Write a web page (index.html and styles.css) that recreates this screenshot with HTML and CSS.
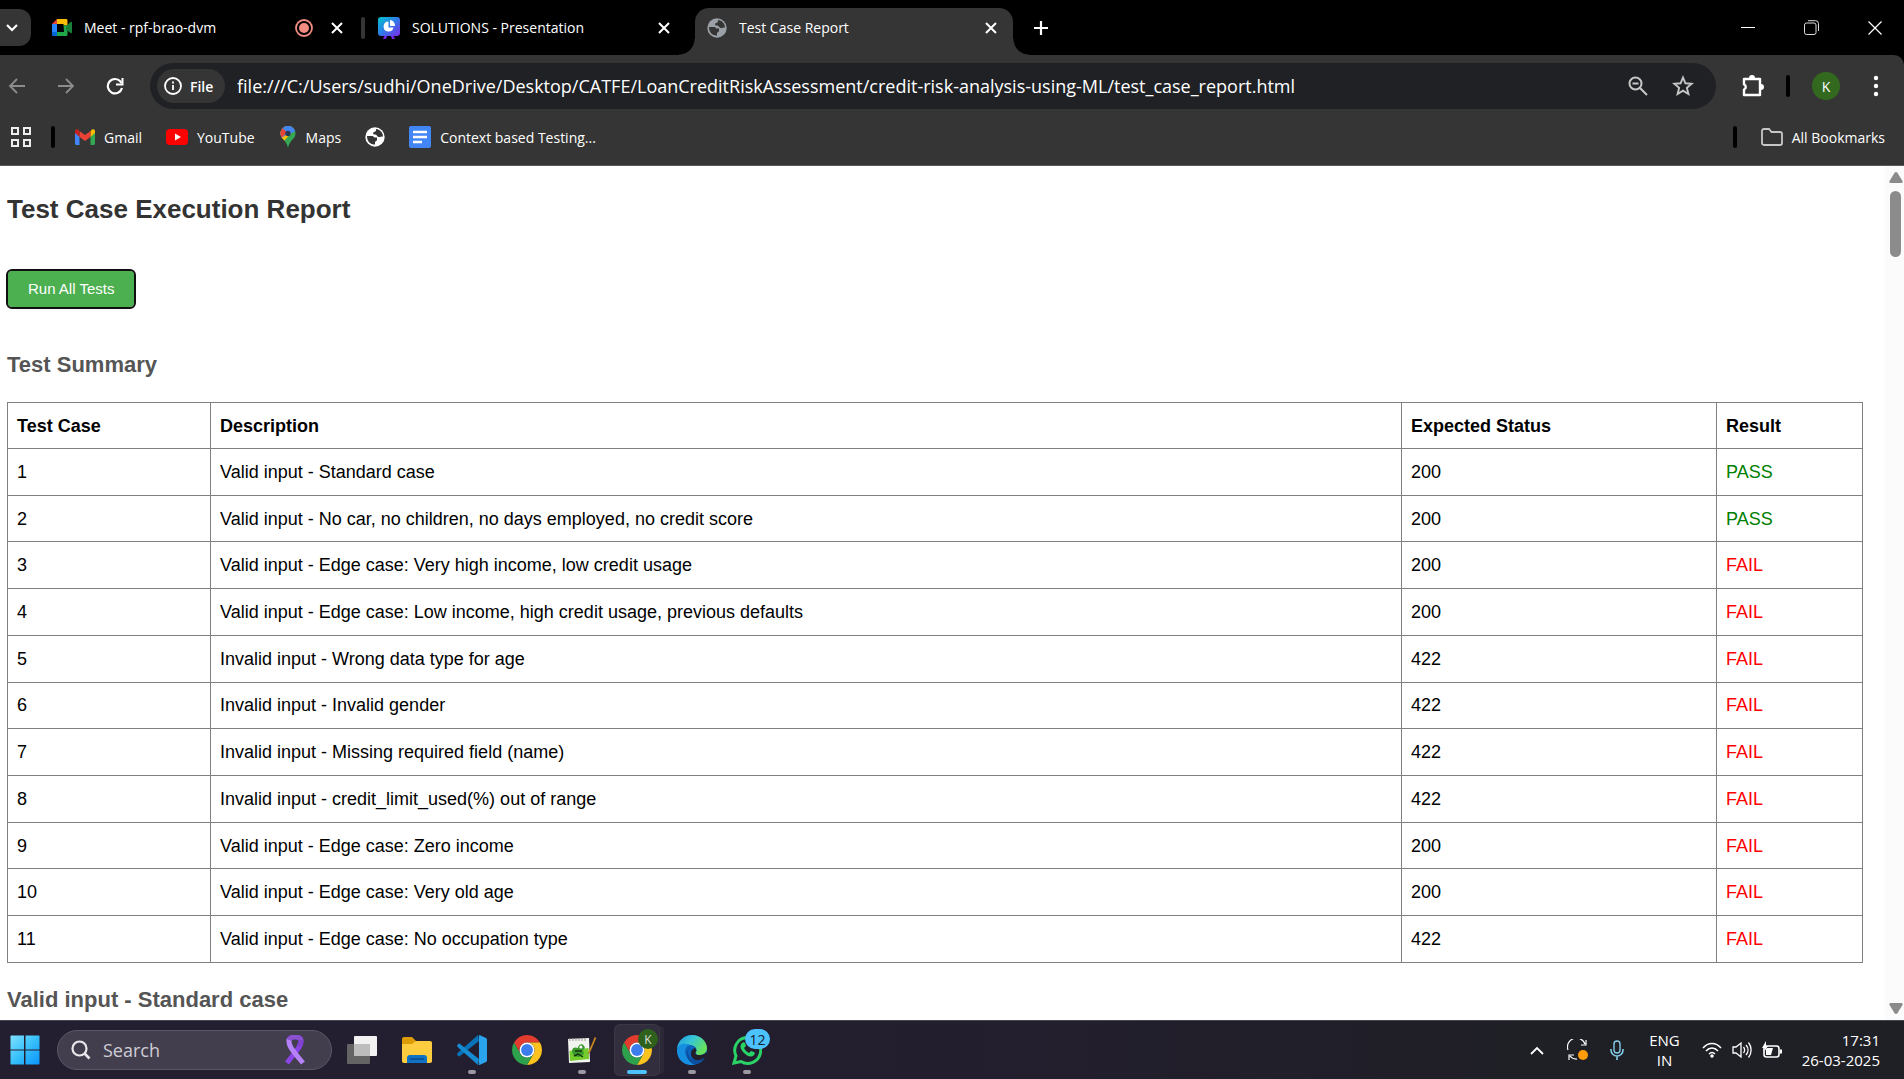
FILE: index.html
```html
<!DOCTYPE html>
<html lang="en">
<head>
<meta charset="utf-8">
<title>Test Case Report</title>
<link rel="stylesheet" href="styles.css">
</head>
<body class="desktop">
<svg class="defs" width="0" height="0" aria-hidden="true">
  <symbol id="i-close" viewBox="0 0 12 12"><path d="M1 1l10 10M11 1L1 11" fill="none" stroke="currentColor" stroke-width="2"/></symbol>
  <symbol id="i-globe" viewBox="0 0 20 20"><circle cx="10" cy="10" r="9.7" fill="currentColor"/><path d="M2 9h5.500c1 0 1 1.500 2.500 1.500h2v2.500c0 1-1.500 1-2 2v2.500C5 18 2 14 2 9zM11 2v1.500c0 1.500-2.500 1-3 2.500 0 1.500 1 1.500 2.500 1.500 1.500.3 1.500 2 3 2.500 1.500.4 2.500-.500 4.500-.5 0-4-3-7-7-7.500z" fill="var(--hole)"/></symbol>
  <symbol id="i-chrome" viewBox="0 0 48 48"><path d="M3.220 12A24 24 0 0 1 44.780 12H24A12 12 0 0 0 13.600 30Z" fill="#e33b2e"/><path d="M44.780 12A24 24 0 0 1 24 48L34.400 30A12 12 0 0 0 24 12Z" fill="#fcc31e"/><path d="M24 48A24 24 0 0 1 3.220 12L13.600 30A12 12 0 0 0 34.400 30Z" fill="#2da14b"/><circle cx="24" cy="24" r="12" fill="#fff"/><circle cx="24" cy="24" r="9.500" fill="#3b7ded"/></symbol>
</svg>

<header class="browser">
  <div class="tabstrip">
    <button class="tab-search" aria-label="Search tabs"><svg width="12" height="8" viewBox="0 0 12 8"><path d="M1 1l5 5 5-5" fill="none" stroke="#fff" stroke-width="2.200"/></svg></button>
    <div class="tab">
      <svg width="20" height="18" viewBox="0 0 20 18"><path d="M5 0h9c1 0 1.500.6 1.500 1.500V7l-4-1V5H5z" fill="#fbbc04"/><path d="M5 0v5H0z" fill="#ea4335"/><path d="M0 5h5v8H0z" fill="#2684fc"/><path d="M0 13h5v4H1.500C.6 17 0 16.500 0 15.500z" fill="#0066da"/><path d="M5 13h7l-.5-7 4 1v8.500c0 1-.6 1.500-1.500 1.500H5z" fill="#21a84a"/><path d="M14 7l4.500-4c.6-.4 1.500-.2 1.500.8v9.500c0 1-.9 1.200-1.500.8L14 10.500z" fill="#188038"/></svg>
      <span class="tab-title">Meet - rpf-brao-dvm</span>
      <svg width="18" height="18" viewBox="0 0 18 18"><circle cx="9" cy="9" r="8" fill="none" stroke="#f28b82" stroke-width="1.800"/><circle cx="9" cy="9" r="5" fill="#f28b82"/></svg>
      <button class="close" aria-label="Close Meet tab"><svg width="12" height="12"><use href="#i-close"/></svg></button>
    </div>
    <span class="tab-rule"></span>
    <div class="tab tab-second">
      <svg width="22" height="22" viewBox="0 0 22 22"><defs><linearGradient id="g-pres" x1="0" y1="0" x2="1" y2="1"><stop offset="0" stop-color="#00c4cc"/><stop offset=".5" stop-color="#2f7be8"/><stop offset="1" stop-color="#7d2ae8"/></linearGradient></defs><path d="M7 17h3l-2 5H5zM12 17h3l2 5h-3z" fill="#7320e0"/><rect width="22" height="19" rx="3" fill="url(#g-pres)"/><path d="M10.500 4.500a5 5 0 1 0 5 6h-5z" fill="#fff"/><path d="M12 3a5.500 5.500 0 0 1 5 6h-5z" fill="#fff"/></svg>
      <span class="tab-title">SOLUTIONS - Presentation</span>
      <button class="close" aria-label="Close Presentation tab"><svg width="12" height="12"><use href="#i-close"/></svg></button>
    </div>
    <div class="tab tab-active">
      <svg class="globe-tab" width="20" height="20"><use href="#i-globe"/></svg>
      <span class="tab-title">Test Case Report</span>
      <button class="close" aria-label="Close Report tab"><svg width="12" height="12"><use href="#i-close"/></svg></button>
    </div>
    <button class="new-tab" aria-label="New tab"><svg width="14" height="14" viewBox="0 0 14 14"><path d="M7 0v14M0 7h14" stroke="#fff" stroke-width="2.200"/></svg></button>
    <div class="window-controls">
      <button aria-label="Minimize"><svg width="14" height="14" viewBox="0 0 14 14"><path d="M0 6.500h14" stroke="#fff"/></svg></button>
      <button aria-label="Restore"><svg width="15" height="15" viewBox="0 0 15 15" fill="none" stroke="#ddd"><rect x=".5" y="3" width="11.500" height="11.500" rx="2"/><path d="M4 .7h7.500a3 3 0 0 1 3 3V11"/></svg></button>
      <button aria-label="Close window"><svg width="14" height="14" viewBox="0 0 14 14"><path d="M.5.5l13 13M13.500.5l-13 13" stroke="#fff" stroke-width="1.200"/></svg></button>
    </div>
  </div>

  <div class="toolbar">
    <div class="nav">
      <button aria-label="Back"><svg width="18" height="18" viewBox="0 0 18 18"><path d="M17 9H2M9 2L2 9l7 7" fill="none" stroke="#8c8c8c" stroke-width="1.800"/></svg></button>
      <button aria-label="Forward"><svg width="18" height="18" viewBox="0 0 18 18"><path d="M1 9h15M9 2l7 7-7 7" fill="none" stroke="#8c8c8c" stroke-width="1.800"/></svg></button>
      <button aria-label="Reload"><svg width="18" height="18" viewBox="0 0 18 18"><path d="M16 11A7.200 7.200 0 1 1 14.500 4.500l1 1.500" fill="none" stroke="#fff" stroke-width="2.200"/><path d="M16.500 1v6.500H10" fill="none" stroke="#fff" stroke-width="2"/></svg></button>
    </div>
    <div class="omnibox">
      <button class="file-chip"><svg width="18" height="18" viewBox="0 0 18 18"><circle cx="9" cy="9" r="8" fill="none" stroke="#fff" stroke-width="1.800"/><path d="M9 8v5M9 4.500v2" stroke="#fff" stroke-width="1.800"/></svg>File</button>
      <input class="url" type="text" aria-label="Address" value="file:///C:/Users/sudhi/OneDrive/Desktop/CATFE/LoanCreditRiskAssessment/credit-risk-analysis-using-ML/test_case_report.html">
      <button aria-label="Zoom"><svg width="20" height="20" viewBox="0 0 20 20" fill="none" stroke="#c7c7c7" stroke-width="2"><circle cx="7.500" cy="7.500" r="6"/><path d="M12 12l7 7M4.500 7.500h6"/></svg></button>
      <button aria-label="Bookmark this page"><svg width="22" height="22" viewBox="0 0 22 22"><path d="M11 2.500l2.400 5.800 6.300.5-4.800 4.100 1.500 6.100-5.400-3.300L5.600 19l1.500-6.100-4.800-4.100 6.300-.5z" fill="none" stroke="#c7c7c7" stroke-width="1.900"/></svg></button>
    </div>
    <div class="actions">
      <button aria-label="Extensions"><svg width="24" height="24" viewBox="0 0 24 24"><path d="M3 5h16v16H3v-5.500a2.800 2.800 0 0 0 0-5.200z" fill="none" stroke="#fff" stroke-width="2.400" stroke-linejoin="round"/><path d="M8 4a3 3 0 0 1 6 0zM20 10a3 3 0 0 1 0 6z" fill="#fff"/></svg></button>
      <span class="rule"></span>
      <button class="avatar" aria-label="Profile">K</button>
      <button class="menu" aria-label="Menu"><svg width="6" height="22" viewBox="0 0 6 22" fill="#fff"><circle cx="3" cy="3" r="2.200"/><circle cx="3" cy="11" r="2.200"/><circle cx="3" cy="19" r="2.200"/></svg></button>
    </div>
  </div>

  <nav class="bookmarks">
    <button class="apps" aria-label="Apps"><svg width="20" height="20" viewBox="0 0 20 20" fill="none" stroke="#eee" stroke-width="2"><path d="M1 1h6v6H1zM13 1h6v6h-6zM1 13h6v6H1zM13 13h6v6h-6z"/></svg></button>
    <span class="rule"></span>
    <a href="#gmail"><svg width="20" height="16" viewBox="0 0 20 16"><path d="M0 3l4.500 3v10H1.500C.6 16 0 15.400 0 14.500z" fill="#4285f4"/><path d="M20 3l-4.500 3v10h3c.9 0 1.500-.6 1.500-1.500z" fill="#34a853"/><path d="M15.500 2L17 .6C18.500-.4 20 .6 20 2.200V4l-4.500 4z" fill="#fbbc04"/><path d="M4.500 2L10 6l5.500-4v6L10 12 4.500 8z" fill="#ea4335"/><path d="M0 4V2.200C0 .6 1.500-.4 3 .6L4.500 2v6z" fill="#c5221f"/></svg>Gmail</a>
    <a href="#youtube"><svg width="22" height="16" viewBox="0 0 22 16"><rect width="22" height="16" rx="4" fill="#f00"/><path d="M9 4.500v7l6-3.500z" fill="#fff"/></svg>YouTube</a>
    <a href="#maps"><svg width="18" height="22" viewBox="1 0 18 22"><defs><clipPath id="pin"><path d="M10 0a7.500 7.500 0 0 0-7.500 7.500C2.500 13 8.500 14 10 22c1.500-8 7.500-9 7.500-14.500A7.500 7.500 0 0 0 10 0z"/></clipPath></defs><g clip-path="url(#pin)"><path d="M0 0h20v22H0z" fill="#34a853"/><path d="M0 0h20L6 15l-6 7z" fill="#fbbc04"/><path d="M0 0h20v2L10 8l-7 4H0z" fill="#4285f4"/><path d="M0 0h6l4 6-7 6H0z" fill="#ea4335"/><path d="M5 0h15v4l-9 4-7-6z" fill="#4285f4"/></g><circle cx="10" cy="7.500" r="2.700" fill="#263a55"/></svg>Maps</a>
    <a href="#site" aria-label="Saved site"><svg class="globe-bar" width="20" height="20"><use href="#i-globe"/></svg></a>
    <a href="#docs"><svg width="22" height="22" viewBox="0 0 22 22"><rect width="22" height="22" rx="2" fill="#4285f4"/><path d="M4 6h14M4 11h14M4 16h9" stroke="#fff" stroke-width="2.400"/></svg>Context based Testing...</a>
    <span class="rule rule-end"></span>
    <a class="all-bookmarks" href="#all"><svg width="22" height="18" viewBox="0 0 22 18"><path d="M1 3c0-1.200.6-2 2-2h5l2.500 3H19c1.300 0 2 .7 2 2v9c0 1.300-.7 2-2 2H3c-1.300 0-2-.7-2-2z" fill="none" stroke="#c7c7c7" stroke-width="1.800"/></svg>All Bookmarks</a>
  </nav>
</header>

<div class="viewport">
  <main class="report">
    <h1 class="title">Test Case Execution Report</h1>
    <button class="run">Run All Tests</button>
    <h2 class="section-title">Test Summary</h2>
    <table class="summary">
      <colgroup><col class="c-case"><col class="c-desc"><col class="c-status"><col class="c-result"></colgroup>
      <thead><tr><th>Test Case</th><th>Description</th><th>Expected Status</th><th>Result</th></tr></thead>
      <tbody>
        <tr><td>1</td><td>Valid input - Standard case</td><td>200</td><td class="pass">PASS</td></tr>
        <tr><td>2</td><td>Valid input - No car, no children, no days employed, no credit score</td><td>200</td><td class="pass">PASS</td></tr>
        <tr><td>3</td><td>Valid input - Edge case: Very high income, low credit usage</td><td>200</td><td class="fail">FAIL</td></tr>
        <tr><td>4</td><td>Valid input - Edge case: Low income, high credit usage, previous defaults</td><td>200</td><td class="fail">FAIL</td></tr>
        <tr><td>5</td><td>Invalid input - Wrong data type for age</td><td>422</td><td class="fail">FAIL</td></tr>
        <tr><td>6</td><td>Invalid input - Invalid gender</td><td>422</td><td class="fail">FAIL</td></tr>
        <tr><td>7</td><td>Invalid input - Missing required field (name)</td><td>422</td><td class="fail">FAIL</td></tr>
        <tr><td>8</td><td>Invalid input - credit_limit_used(%) out of range</td><td>422</td><td class="fail">FAIL</td></tr>
        <tr><td>9</td><td>Valid input - Edge case: Zero income</td><td>200</td><td class="fail">FAIL</td></tr>
        <tr><td>10</td><td>Valid input - Edge case: Very old age</td><td>200</td><td class="fail">FAIL</td></tr>
        <tr><td>11</td><td>Valid input - Edge case: No occupation type</td><td>422</td><td class="fail">FAIL</td></tr>
      </tbody>
    </table>
    <h2 class="section-title case-title">Valid input - Standard case</h2>
  </main>
  <div class="scrollbar">
    <svg width="14" height="11" viewBox="0 0 14 11"><path d="M7 0c.6 0 1 .3 1.400.8L13.500 9c.5 1 0 2-1 2h-11C.5 11 0 10 .5 9L5.600.8C6 .3 6.400 0 7 0z" fill="#8b8b8b"/></svg>
    <span class="thumb"></span>
    <svg class="down" width="14" height="11" viewBox="0 0 14 11"><path d="M7 11c.6 0 1-.3 1.400-.8L13.500 2c.5-1 0-2-1-2h-11C.5 0 0 1 .5 2l5.100 8.200c.4.500.8.800 1.400.8z" fill="#8b8b8b"/></svg>
  </div>
</div>

<footer class="taskbar">
  <button class="start" aria-label="Start"><svg width="30" height="30" viewBox="0 0 30 30"><defs><linearGradient id="g-win" x1="0" y1="0" x2="1" y2="1"><stop offset="0" stop-color="#7fe0ff"/><stop offset=".5" stop-color="#38c0fb"/><stop offset="1" stop-color="#0a93fb"/></linearGradient></defs><path d="M1 .5h13v14H.5V1zM15.500.5H29l.5.5v13.500h-14zM.5 15.500H14v14H1L.5 29zM15.500 15.500h14V29l-.5.5H15.500z" fill="url(#g-win)"/></svg></button>
  <label class="search">
    <svg width="20" height="20" viewBox="0 0 20 20"><circle cx="8.500" cy="8.500" r="7" fill="none" stroke="#e8e8ea" stroke-width="2.200"/><path d="M13.500 13.500l5 5" stroke="#e8e8ea" stroke-width="2.600"/></svg>
    <input type="text" placeholder="Search" aria-label="Search">
    <svg width="22" height="30" viewBox="0 0 22 30"><path d="M5 5C6 1 16 1 17 5c1 5-4 10-14 23" fill="none" stroke="#8b45e6" stroke-width="5"/><path d="M17 5c0 3-1 4-2 6" fill="none" stroke="#8040d0" stroke-width="5"/><path d="M5 4c-1 7 4 12 14 24" fill="none" stroke="#b583f7" stroke-width="5"/><path d="M5 5C6 1 16 1 17 5" fill="none" stroke="#8a52cf" stroke-width="4"/></svg>
  </label>
  <div class="apps-row">
    <button class="app" aria-label="Task view"><svg width="30" height="28" viewBox="0 0 30 28"><rect y="8" width="23" height="20" rx="1" fill="#646464"/><rect x="7" width="23" height="20" rx="1" fill="#f2f2f2"/><path d="M7 8h16v12H7z" fill="#bdbdbd"/></svg></button>
    <button class="app" aria-label="File Explorer"><svg width="30" height="28" viewBox="0 0 30 28"><path d="M0 3c0-1 .6-2 2-2h8l4 4v6H0z" fill="#dc9c06"/><path d="M0 8h10l4-3h14c1.300 0 2 .7 2 2v18c0 1.300-.7 2-2 2H2c-1.300 0-2-.7-2-2z" fill="#fdcd3f"/><path d="M5 27v-5c0-2 1-3 3-3h14c2 0 3 1 3 3v5z" fill="#0e73c4"/><path d="M8 23h14" stroke="#07478a" stroke-width="1.500"/></svg></button>
    <button class="app running" aria-label="Visual Studio Code"><svg width="30" height="30" viewBox="0 0 30 30"><path d="M22 6L3 21c-.7.6-1.300.5-1.900-.1L.4 20c-.5-.6-.4-1.300.2-1.900L21 0z" fill="#0873b8"/><path d="M22 24L3 9c-.7-.6-1.300-.5-1.900.1L.4 10c-.5.6-.4 1.300.2 1.900L21 30z" fill="#168bd2"/><path d="M21 0c.8-.3 1.400 0 2 .3l5.500 2.500c1 .5 1.500 1 1.500 2v20.400c0 1-.5 1.500-1.500 2L23 29.700c-.6.3-1.200.6-2 .3 1 0 1.500-.7 1.500-2V2c0-1.300-.5-2-1.500-2z" fill="#2ba4ee"/><path d="M22 1v28l7-3V4z" fill="#2ba4ee"/></svg></button>
    <button class="app" aria-label="Chrome"><svg width="30" height="30"><use href="#i-chrome"/></svg></button>
    <button class="app running" aria-label="Notepad++"><svg width="30" height="30" viewBox="0 0 30 30"><path d="M1 4l21-1 1 24-21 1z" fill="#f2f4ef"/><path d="M2.500 16l19-3 .5 11-19 2z" fill="#75cc2d"/><path d="M5 16c0-4 4-4 6-3 0-4 5-5 6-2 2 2 0 4-2 4 3 2 2 6-1 6-3 2-8 1-9-5z" fill="#3a9a2b"/><path d="M8 16h7M7 21l4-2 5 3M13 12h3" stroke="#15320f" stroke-width="1.400" fill="none"/><circle cx="14" cy="12" r="1.600" fill="#fff"/><path d="M3 3v3M6 3v3M9 3v3M12 3v3M15 3v3M18 3v3" stroke="#999"/><path d="M28 2l-6 14-1 3 2-2 6-14z" fill="#eaa82b" stroke="#9a6310" stroke-width=".5"/></svg></button>
    <button class="app current" aria-label="Chrome, current window"><svg width="30" height="30"><use href="#i-chrome"/></svg><span class="badge badge-k">K</span></button>
    <button class="app running" aria-label="Edge"><svg width="30" height="30" viewBox="0 0 30 30"><defs><linearGradient id="g-edge" x1="0" y1="0" x2="1" y2=".5"><stop offset="0" stop-color="#2097e3"/><stop offset=".5" stop-color="#37c6d4"/><stop offset="1" stop-color="#67e25c"/></linearGradient></defs><circle cx="15" cy="15" r="15" fill="#0c64bd"/><path d="M0 14C1 5 8 0 15 0c9 0 15 7 15 13 0 5-4 7-7 7-5 0-5-2-4-3 2-5-3-7-6-7C6 8 1 11 0 14z" fill="url(#g-edge)"/><path d="M0 15c1-5 6-8 13-5-5 1-6 6-4 11 2 4 5 7 9 8.500C8 32 0 25 0 15z" fill="#168fe0"/><path d="M19 17c-1 1-1 3 4 3 3 0 5-1 6-3l2 4-4 3c-6 4-14 0-13-6 0-3 2-4 4-5 1 1 2 2 1 4z" fill="#211e2e"/><path d="M13 12c-4 4-2 11 4 13 4 1 8 0 11-3-3 6-8 8-12 7-6-3-9-12-3-17z" fill="#0c4ea0"/></svg></button>
    <button class="app running" aria-label="WhatsApp"><svg width="30" height="30" viewBox="0 0 30 30"><path d="M2 28l2-7A13 13 0 1 1 9 26.500z" fill="none" stroke="#29d366" stroke-width="3"/><path d="M10 8c-3 3-1 7 2 10s7 5 10 2c1-1 1-2 0-3l-3-1-2 2c-2-1-4-3-5-5l2-2-1-3c-1-1-2-1-3 0z" fill="#29d366"/></svg><span class="badge badge-count">12</span></button>
  </div>
  <div class="tray">
    <button class="t-up" aria-label="Hidden icons"><svg width="14" height="9" viewBox="0 0 14 9"><path d="M1 8l6-6 6 6" fill="none" stroke="#fff" stroke-width="1.800"/></svg></button>
    <button aria-label="Sync"><svg width="22" height="22" viewBox="0 0 22 22"><path d="M1 11A9 9 0 0 1 18 5M19 1v5h-5M10 20a8 8 0 0 1-7-3M2 21v-5h5" fill="none" stroke="#fff" stroke-width="1.200"/><circle cx="16" cy="16" r="5" fill="#ff9a0b"/></svg></button>
    <button class="t-mic" aria-label="Microphone"><svg width="14" height="20" viewBox="0 0 14 20"><rect x="4" y="1" width="6" height="12" rx="3" fill="none" stroke="#84cce8" stroke-width="1.400"/><path d="M1 9v1a6 6 0 0 0 12 0V9M7 16v4" fill="none" stroke="#84cce8" stroke-width="1.600"/></svg></button>
    <button class="lang">ENG<br>IN</button>
    <button class="status" aria-label="Network, volume and battery">
      <svg width="20" height="16" viewBox="0 0 20 16" fill="none" stroke="#fff" stroke-width="1.500"><path d="M1 6c5-6 13-6 18 0M4 9c3.500-4 8.500-4 12 0M7 12c2-2 4-2 6 0"/><circle cx="10" cy="14" r="1" fill="#fff"/></svg>
      <svg width="20" height="18" viewBox="0 0 20 18" fill="none" stroke="#fff" stroke-width="1.300"><path d="M1 6h3l5-4v14l-5-4H1zM11.500 6c1.500 2 1.500 4 0 6M14 4c2.700 3 2.700 7 0 10M16.500 1.500c3.500 4.500 3.500 10.500 0 15"/></svg>
      <svg width="20" height="18" viewBox="0 0 20 18"><rect x="2" y="5" width="15" height="11" rx="2.500" fill="none" stroke="#fff" stroke-width="1.600"/><path d="M18 8.500h2v4h-2z" fill="#fff"/><path d="M4 7h7l-2 7H4zM4 0L0 7h3l-1 4 4-6H4z" fill="#fff"/></svg>
    </button>
    <button class="clock">17:31<br>26-03-2025</button>
  </div>
</footer>
</body>
</html>
```
FILE: styles.css
```css
:root {
  --ui: "Segoe UI", "Open Sans", "Noto Sans", sans-serif;
  --page: Arial, "Liberation Sans", sans-serif;
  --chrome: #353535;
}

* { box-sizing: border-box; }

.desktop {
  margin: 0;
  height: 100vh;
  display: flex;
  flex-direction: column;
  overflow: hidden;
  background: #fff;
  font-family: var(--ui);
}

.defs { position: absolute; }

svg { display: block; flex: none; }

button {
  border: 0;
  padding: 0;
  background: none;
  color: inherit;
  font: inherit;
  flex: none;
}

/* Browser frame */
.browser { background: #000; color: #fff; font-size: 14px; }

.tabstrip { display: flex; align-items: center; height: 55px; }

.tab-search {
  width: 31px;
  height: 37px;
  padding-left: 6px;
  border-radius: 0 12px 12px 0;
  background: var(--chrome);
}

.tab {
  display: flex;
  align-items: center;
  gap: 12px;
  width: 330px;
  padding: 0 18px 0 21px;
}

.tab .close { margin-left: 6px; }

.tab-title { flex: 1; white-space: nowrap; overflow: hidden; }

.tab-rule { width: 4px; height: 22px; border-radius: 2px; background: #353535; }

.tab-second { padding: 0 25px 0 13px; }

.tab-active {
  position: relative;
  align-self: flex-end;
  width: 318px;
  height: 47px;
  padding: 0 16px 8px 12px;
  border-radius: 14px 14px 0 0;
  background: var(--chrome);
}

.tab-active::before,
.tab-active::after {
  content: "";
  position: absolute;
  bottom: 0;
  width: 16px;
  height: 16px;
}

.tab-active::before { right: 100%; background: radial-gradient(circle at 0 0, #000 15px, var(--chrome) 16px); }
.tab-active::after { left: 100%; background: radial-gradient(circle at 100% 0, #000 15px, var(--chrome) 16px); }

.globe-tab { color: #9aa0a6; --hole: #353535; }
.globe-bar { color: #fff; --hole: #353535; }

.new-tab { margin-left: 21px; }

.window-controls { display: flex; gap: 49px; margin-left: auto; padding-right: 22px; }

.toolbar {
  display: flex;
  align-items: center;
  height: 62px;
  border-radius: 0 10px 0 0;
  background: var(--chrome);
}

.nav { display: flex; gap: 31px; padding: 0 26px 0 8px; }

.omnibox {
  display: flex;
  align-items: center;
  gap: 24px;
  flex: 1;
  min-width: 0;
  height: 46px;
  padding: 0 22px 0 7px;
  border-radius: 23px;
  background: #202125;
}

.file-chip {
  display: flex;
  align-items: center;
  gap: 8px;
  width: 68px;
  height: 34px;
  padding-left: 7px;
  border-radius: 17px;
  background: var(--chrome);
  font-weight: 600;
}

.url {
  flex: 1;
  min-width: 0;
  margin-left: -12px;
  padding: 0;
  border: 0;
  outline: 0;
  background: none;
  color: #fff;
  font: 18px var(--ui);
}

.actions { display: flex; align-items: center; padding: 0 25px 0 25px; }

.rule { width: 4px; height: 22px; border-radius: 2px; background: #000; }

.actions .rule { margin: 0 22px 0 21px; }

.avatar {
  width: 28px;
  height: 28px;
  border-radius: 50%;
  background: #33691e;
  color: #fff;
}

.menu { margin-left: 33px; }

.bookmarks {
  display: flex;
  align-items: center;
  gap: 24px;
  height: 49px;
  padding: 0 19px 8px 11px;
  border-bottom: 1px solid #5a5a5a;
  background: var(--chrome);
}

.bookmarks a {
  display: flex;
  align-items: center;
  gap: 9px;
  color: #fff;
  text-decoration: none;
  white-space: nowrap;
}

.apps + .rule { margin: 0 -4px; }

.rule-end { margin-left: auto; }

/* Report page */
.viewport { display: flex; flex: 1; min-height: 0; overflow: hidden; background: #fff; }

.report {
  flex: 1;
  min-width: 0;
  padding: 27px 22px 0 7px;
  font-family: var(--page);
}

.title { margin: 0; color: #333; font-size: 26px; line-height: 32px; }

.run {
  margin: 46px 0 0 1px;
  padding: 10px 20px;
  border-radius: 4px;
  outline: 2px solid #101010;
  background: #4caf50;
  color: #fff;
  font: 15px/16px var(--page);
}

.section-title { margin: 44px 0 23px; color: #555; font-size: 22px; line-height: 28px; }

.summary {
  width: 100%;
  height: 561px;
  border-collapse: collapse;
  table-layout: fixed;
  color: #000;
  font-size: 18px;
  line-height: 22px;
}

.summary th,
.summary td {
  padding: 11px 9px;
  border: 1px solid #808080;
  text-align: left;
}

.summary th { padding: 12px 9px 11px; }

.c-case { width: 203px; }
.c-status { width: 315px; }
.c-result { width: 146px; }

.summary .pass { color: #008000; }
.summary .fail { color: #f00; }

.case-title { margin: 23px 0 0; }

.scrollbar {
  display: flex;
  flex-direction: column;
  align-items: center;
  gap: 8px;
  width: 19px;
  padding: 6px 0 6px 2px;
  background: #fbfbfb;
}

.thumb { width: 11px; height: 66px; border-radius: 6px; background: #8b8b8b; }

.down { margin-top: auto; }

/* Taskbar */
.taskbar {
  display: flex;
  align-items: center;
  height: 59px;
  padding: 0 24px 0 10px;
  border-top: 1px solid #45454f;
  background: linear-gradient(90deg, #231f31 0%, #231e2e 50%, #1f1f26 80%);
  color: #fff;
}

.search {
  display: flex;
  align-items: center;
  gap: 12px;
  width: 275px;
  height: 40px;
  margin: 0 8px 0 17px;
  padding: 0 25px 0 13px;
  border: 1px solid #5b5767;
  border-radius: 20px;
  background: #433e4e;
}

.search input {
  flex: 1;
  min-width: 0;
  padding: 0;
  border: 0;
  outline: 0;
  background: none;
  color: #fff;
  font: 18px var(--ui);
}

.search input::placeholder { color: #cfcdd4; opacity: 1; }

.apps-row { display: flex; gap: 11px; }

.app {
  position: relative;
  display: flex;
  align-items: center;
  justify-content: center;
  width: 44px;
  height: 50px;
  border-radius: 5px;
}

.running::after,
.current::after {
  content: "";
  position: absolute;
  bottom: 1px;
  width: 8px;
  height: 4px;
  border-radius: 2px;
  background: #9a98a0;
}

.current { background: #322e3d; box-shadow: 0 0 0 1px #3b3745, 6px 0 0 -1px #2c2837; }

.current::after { width: 20px; background: #4cc2ff; }

.badge {
  position: absolute;
  top: 4px;
  display: flex;
  align-items: center;
  justify-content: center;
  height: 20px;
  border-radius: 10px;
}

.badge-k { right: 1px; width: 20px; background: #2d611c; color: #ddd; font-size: 12px; }
.badge-count { right: -1px; width: 25px; background: #4cc2ff; color: #14202b; font-size: 14px; }

.tray { display: flex; align-items: center; margin-left: auto; font-size: 15px; line-height: 20px; }

.t-up { margin-right: 23px; }
.t-mic { margin: 0 25px 0 21px; }
.lang { text-align: center; }
.status { display: flex; align-items: center; gap: 10px; margin: 0 20px 0 22px; }
.clock { text-align: right; }
```
